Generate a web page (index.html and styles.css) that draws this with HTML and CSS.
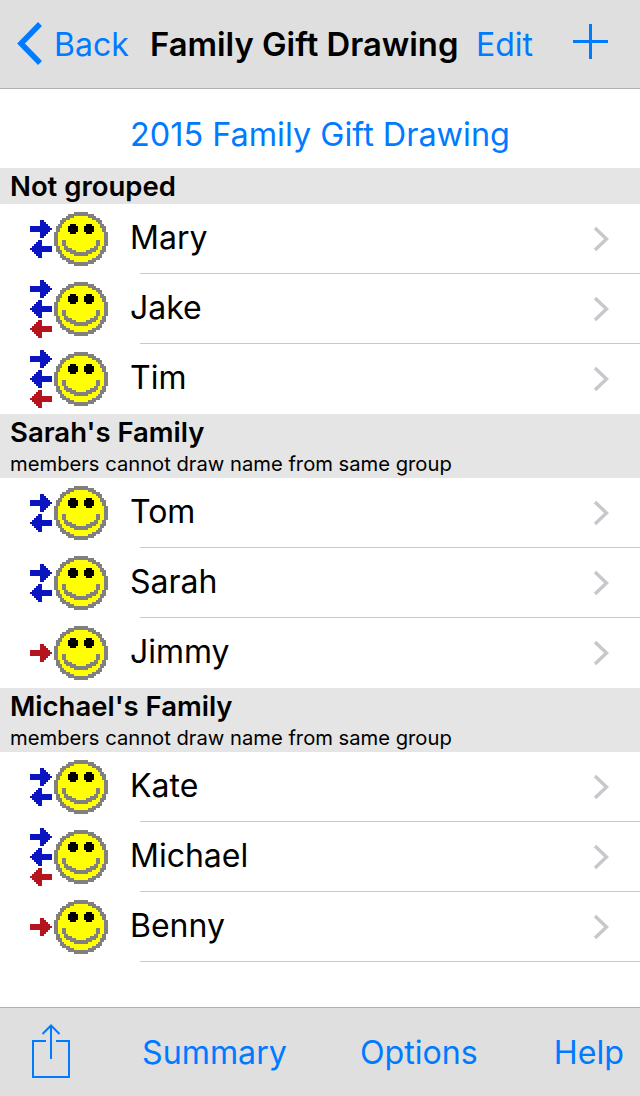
FILE: index.html
```html
<!DOCTYPE html>
<html>
<head>
    <title>Family Gift Drawing</title>
    <meta name="viewport" content="width=device-width, initial-scale=1.0">
    <link rel="stylesheet" href="styles.css">
</head>

<body>

<svg class="defs" width="0" height="0">
    <symbol id="face" viewBox="0 0 27 27">
        <path fill="#808080" d="M10 0H17V1H20V2H21V3H23V4H24V6H25V7H26V10H27V17H26V20H25V21H24V23H23V24H21V25H20V26H17V27H10V26H7V25H6V24H4V23H3V21H2V20H1V17H0V10H1V7H2V6H3V4H4V3H6V2H7V1H10Z"/>
        <path fill="#ffff00" d="M10 2H17V3H19V4H21V5H22V6H23V8H24V10H25V17H24V19H23V21H22V22H21V23H19V24H17V25H10V24H8V23H6V22H5V21H4V19H3V17H2V10H3V8H4V6H5V5H6V4H8V3H10Z"/>
        <path fill="#000" d="M8 6H11V7H12V10H11V11H8V10H7V7H8ZM16 6H19V7H20V10H19V11H16V10H15V7H16Z"/>
        <path fill="#808080" d="M4 14V17H5V19H6V20H8V21H10V22H17V21H19V20H21V19H22V17H23V14H21V17H20V18H18V19H16V20H11V19H9V18H7V17H6V14Z"/>
    </symbol>
    <symbol id="arrow" viewBox="0 0 22 18">
        <path d="M10 0H14V2H16V4H18V6H20V8H22V10H20V12H18V14H16V16H14V18H10V12H0V6H10Z"/>
    </symbol>
</svg>

<header class="navbar">
    <a class="back">
        <svg width="28" height="44" viewBox="0 0 28 44"><path d="M25 2L6 21.500L25 41" fill="none" stroke="#007aff" stroke-width="5.500"/></svg>
        Back
    </a>
    <h1>Family Gift Drawing</h1>
    <a class="edit">Edit</a>
    <svg class="plus" width="35" height="35" viewBox="0 0 35 35"><path d="M17.500 0V35M0 17.500H35" stroke="#007aff" stroke-width="3"/></svg>
</header>

<main>
    <div class="event">2015 Family Gift Drawing</div>

    <div class="group">
        <h2>Not grouped</h2>
    </div>
    <div class="row">
        <div class="status">
            <div class="arrows">
                <svg class="arrow blue"><use href="#arrow"/></svg>
                <svg class="arrow blue left"><use href="#arrow"/></svg>
            </div>
            <svg class="face"><use href="#face"/></svg>
        </div>
        <div class="row-body">
            <span>Mary</span>
            <svg class="chevron" viewBox="0 0 17 26"><path d="M2 2L13.5 13L2 24" fill="none" stroke="#c7c7cc" stroke-width="3.4"/></svg>
        </div>
    </div>
    <div class="row">
        <div class="status">
            <div class="arrows">
                <svg class="arrow blue"><use href="#arrow"/></svg>
                <svg class="arrow blue left"><use href="#arrow"/></svg>
                <svg class="arrow red left"><use href="#arrow"/></svg>
            </div>
            <svg class="face"><use href="#face"/></svg>
        </div>
        <div class="row-body">
            <span>Jake</span>
            <svg class="chevron" viewBox="0 0 17 26"><path d="M2 2L13.5 13L2 24" fill="none" stroke="#c7c7cc" stroke-width="3.4"/></svg>
        </div>
    </div>
    <div class="row last">
        <div class="status">
            <div class="arrows">
                <svg class="arrow blue"><use href="#arrow"/></svg>
                <svg class="arrow blue left"><use href="#arrow"/></svg>
                <svg class="arrow red left"><use href="#arrow"/></svg>
            </div>
            <svg class="face"><use href="#face"/></svg>
        </div>
        <div class="row-body">
            <span>Tim</span>
            <svg class="chevron" viewBox="0 0 17 26"><path d="M2 2L13.5 13L2 24" fill="none" stroke="#c7c7cc" stroke-width="3.4"/></svg>
        </div>
    </div>

    <div class="group">
        <h2>Sarah's Family</h2>
        <p>members cannot draw name from same group</p>
    </div>
    <div class="row">
        <div class="status">
            <div class="arrows">
                <svg class="arrow blue"><use href="#arrow"/></svg>
                <svg class="arrow blue left"><use href="#arrow"/></svg>
            </div>
            <svg class="face"><use href="#face"/></svg>
        </div>
        <div class="row-body">
            <span>Tom</span>
            <svg class="chevron" viewBox="0 0 17 26"><path d="M2 2L13.5 13L2 24" fill="none" stroke="#c7c7cc" stroke-width="3.4"/></svg>
        </div>
    </div>
    <div class="row">
        <div class="status">
            <div class="arrows">
                <svg class="arrow blue"><use href="#arrow"/></svg>
                <svg class="arrow blue left"><use href="#arrow"/></svg>
            </div>
            <svg class="face"><use href="#face"/></svg>
        </div>
        <div class="row-body">
            <span>Sarah</span>
            <svg class="chevron" viewBox="0 0 17 26"><path d="M2 2L13.5 13L2 24" fill="none" stroke="#c7c7cc" stroke-width="3.4"/></svg>
        </div>
    </div>
    <div class="row last">
        <div class="status">
            <div class="arrows">
                <svg class="arrow red"><use href="#arrow"/></svg>
            </div>
            <svg class="face"><use href="#face"/></svg>
        </div>
        <div class="row-body">
            <span>Jimmy</span>
            <svg class="chevron" viewBox="0 0 17 26"><path d="M2 2L13.5 13L2 24" fill="none" stroke="#c7c7cc" stroke-width="3.4"/></svg>
        </div>
    </div>

    <div class="group">
        <h2>Michael's Family</h2>
        <p>members cannot draw name from same group</p>
    </div>
    <div class="row">
        <div class="status">
            <div class="arrows">
                <svg class="arrow blue"><use href="#arrow"/></svg>
                <svg class="arrow blue left"><use href="#arrow"/></svg>
            </div>
            <svg class="face"><use href="#face"/></svg>
        </div>
        <div class="row-body">
            <span>Kate</span>
            <svg class="chevron" viewBox="0 0 17 26"><path d="M2 2L13.5 13L2 24" fill="none" stroke="#c7c7cc" stroke-width="3.4"/></svg>
        </div>
    </div>
    <div class="row">
        <div class="status">
            <div class="arrows">
                <svg class="arrow blue"><use href="#arrow"/></svg>
                <svg class="arrow blue left"><use href="#arrow"/></svg>
                <svg class="arrow red left"><use href="#arrow"/></svg>
            </div>
            <svg class="face"><use href="#face"/></svg>
        </div>
        <div class="row-body">
            <span>Michael</span>
            <svg class="chevron" viewBox="0 0 17 26"><path d="M2 2L13.5 13L2 24" fill="none" stroke="#c7c7cc" stroke-width="3.4"/></svg>
        </div>
    </div>
    <div class="row">
        <div class="status">
            <div class="arrows">
                <svg class="arrow red"><use href="#arrow"/></svg>
            </div>
            <svg class="face"><use href="#face"/></svg>
        </div>
        <div class="row-body">
            <span>Benny</span>
            <svg class="chevron" viewBox="0 0 17 26"><path d="M2 2L13.5 13L2 24" fill="none" stroke="#c7c7cc" stroke-width="3.4"/></svg>
        </div>
    </div>
</main>

<footer class="toolbar">
    <svg class="share" width="38" height="56" viewBox="0 0 38 56">
        <path d="M14 17H1V53H37V17H24" fill="none" stroke="#007aff" stroke-width="2"/>
        <path d="M19 35V2M10.500 10L19 1.500L27.500 10" fill="none" stroke="#007aff" stroke-width="2"/>
    </svg>
    <a>Summary</a>
    <a>Options</a>
    <a>Help</a>
</footer>

</body>
</html>
```

FILE: styles.css
```css
html, body {
    margin: 0;
    padding: 0;
    background: white;
}

body {
    font-family: Inter, "Noto Sans", sans-serif;
    width: 640px;
    height: 1096px;
    display: flex;
    flex-direction: column;
    color: black;
    overflow: hidden;
}

.defs {
    display: block;
    height: 0;
}

.navbar {
    height: 88px;
    flex: none;
    display: flex;
    align-items: center;
    background: #dfdfdf;
    border-bottom: 1px solid #b2b2b2;
    color: #007aff;
    font-size: 32px;
}

.back {
    display: flex;
    align-items: center;
    gap: 11px;
    margin-left: 15px;
    width: 135px;
    flex: none;
}

.navbar h1 {
    margin: 0;
    font-size: 32.8px;
    font-weight: 600;
    color: black;
    width: 326px;
    flex: none;
    white-space: nowrap;
}

.edit {
    width: 97px;
    flex: none;
}

.plus {
    flex: none;
    margin-bottom: 5px;
}

main {
    flex: 1;
}

.event {
    height: 79px;
    box-sizing: border-box;
    padding-top: 12px;
    display: flex;
    align-items: center;
    justify-content: center;
    font-size: 32.4px;
    color: #007aff;
}

.group {
    background: #e5e5e5;
    padding: 3px 10px 2px;
}

.group h2 {
    margin: 0;
    font-size: 27.5px;
    line-height: 31px;
    font-weight: 600;
}

.group p {
    margin: 0;
    padding-top: 4px;
    font-size: 20.2px;
    line-height: 24px;
}

.row {
    height: 70px;
    display: flex;
}

.status {
    width: 131px;
    flex: none;
    display: flex;
    align-items: center;
    box-sizing: border-box;
    padding-left: 30px;
}

.arrows {
    width: 22px;
    height: 58px;
    flex: none;
    display: flex;
    flex-direction: column;
    justify-content: center;
    gap: 2px;
}

.arrow {
    width: 22px;
    height: 18px;
    display: block;
    shape-rendering: crispEdges;
}

.arrow.blue {
    fill: #0a14c0;
}

.arrow.red {
    fill: #b4141e;
}

.arrow.left {
    transform: scaleX(-1);
}

.face {
    width: 54px;
    height: 54px;
    margin-left: 2px;
    flex: none;
    shape-rendering: crispEdges;
}

.row-body {
    flex: 1;
    display: flex;
    align-items: center;
    justify-content: space-between;
    font-size: 32px;
    position: relative;
}

.row-body span {
    margin-left: -1px;
    padding-bottom: 4px;
}

.row-body::after {
    content: "";
    position: absolute;
    left: 9px;
    right: 0;
    bottom: 0;
    height: 1px;
    background: #c8c7cc;
}

.row.last .row-body::after {
    display: none;
}

.chevron {
    width: 17px;
    height: 26px;
    margin-right: 30px;
}

.toolbar {
    height: 88px;
    flex: none;
    display: flex;
    align-items: center;
    background: #dfdfdf;
    border-top: 1px solid #b2b2b2;
    color: #007aff;
    font-size: 32.2px;
}

.share {
    margin-left: 32px;
    margin-right: 72px;
    flex: none;
}

.toolbar a {
    margin-right: 73px;
    white-space: nowrap;
}

.toolbar a:last-child {
    margin-right: 0;
    margin-left: 3px;
}
```
